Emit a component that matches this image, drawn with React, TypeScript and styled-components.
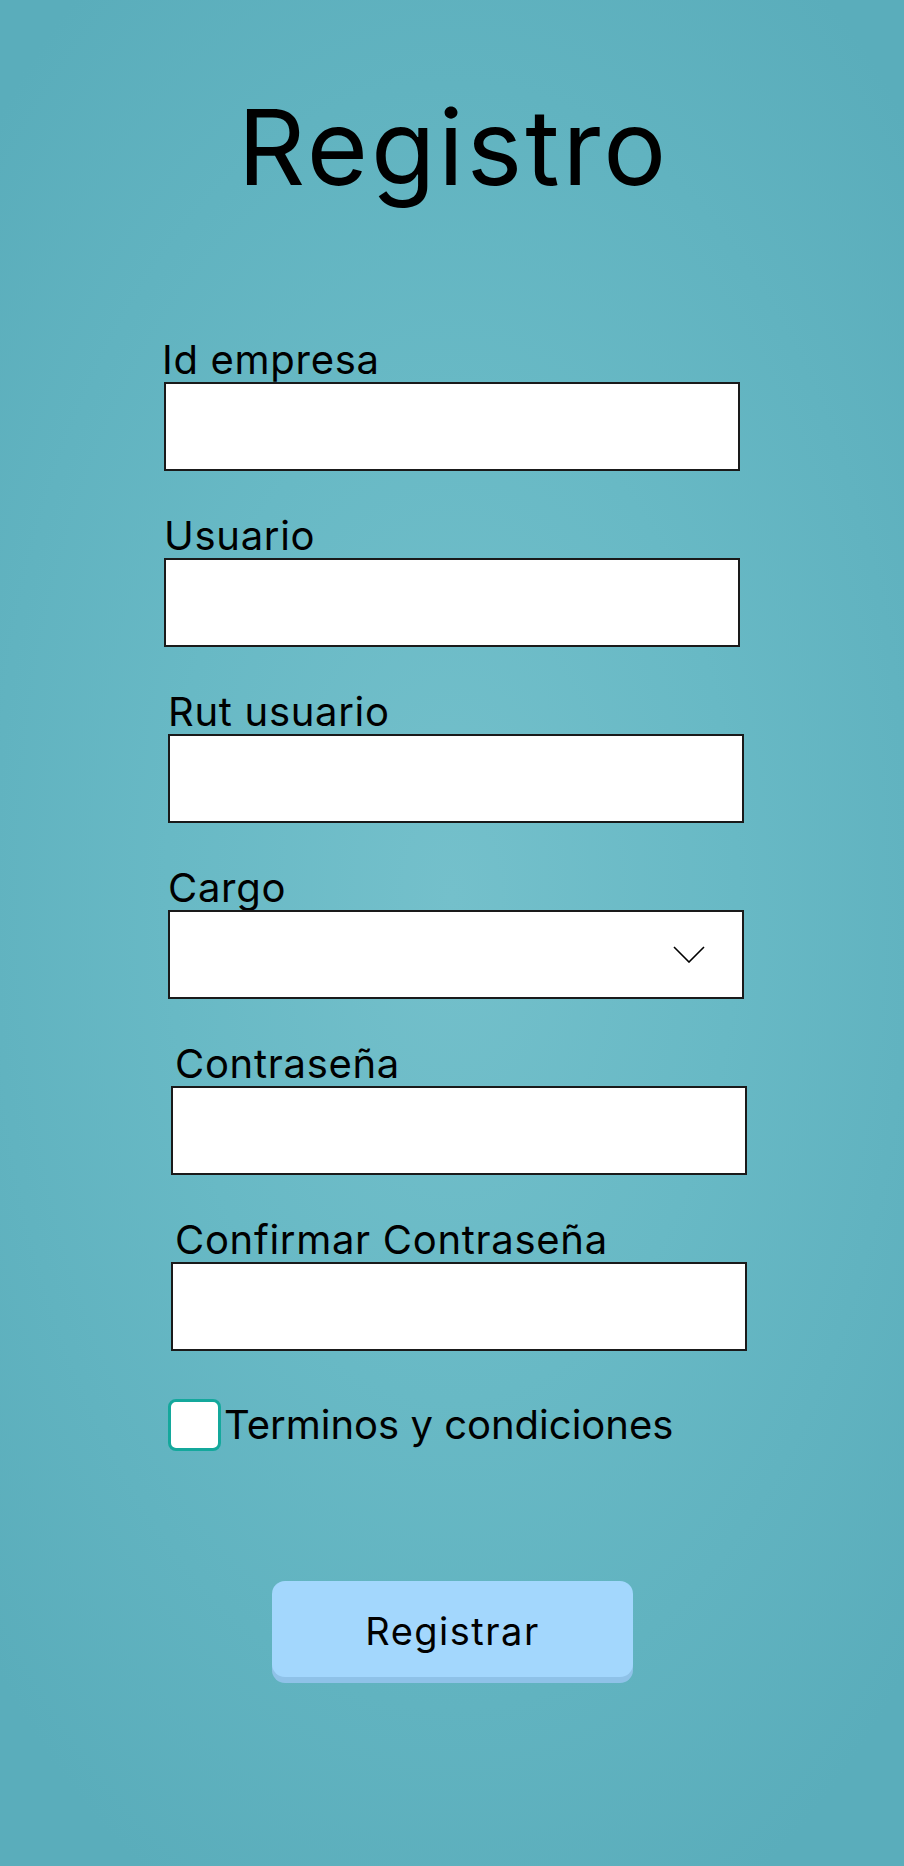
import React from "react";
import styled, { createGlobalStyle } from "styled-components";

const Global = createGlobalStyle`
  html, body { margin: 0; padding: 0; }
  body {
    font-family: Inter, "Noto Sans", sans-serif;
    color: #000;
    background: #5cafbd;
  }
`;

const Page = styled.main`
  box-sizing: border-box;
  width: 904px;
  min-height: 1866px;
  padding-top: 94px;
  display: flex;
  flex-direction: column;
  align-items: center;
  background: radial-gradient(ellipse 70% 60% at 50% 48%, #74c0cb 0%, #68b9c5 45%, #5aadbb 100%);
`;

const Title = styled.h1`
  margin: 0;
  font-family: Inter, sans-serif;
  font-weight: 400;
  font-size: 105px;
  line-height: 105px;
  letter-spacing: 3px;
  padding-left: 3px;
`;

const Form = styled.form`
  margin-top: 138px;
  width: 100%;
  display: flex;
  flex-direction: column;
  gap: 42px;
`;

const Field = styled.div<{ $shift: number }>`
  display: flex;
  flex-direction: column;
  margin-left: ${(p) => p.$shift}px;
  width: 576px;
`;

const Label = styled.label<{ $shift: number }>`
  font-size: 40px;
  line-height: 45px;
  height: 45px;
  letter-spacing: 0.7px;
  margin-left: ${(p) => p.$shift}px;
  white-space: nowrap;
`;

const Box = styled.div`
  box-sizing: border-box;
  height: 89px;
  background: #fff;
  border: 2px solid #1a1a1a;
  display: flex;
  align-items: center;
  justify-content: flex-end;
  padding-right: 37px;
`;

const Input = styled.input`
  box-sizing: border-box;
  height: 89px;
  width: 100%;
  background: #fff;
  border: 2px solid #1a1a1a;
  outline: none;
  font-size: 32px;
  font-family: Inter, sans-serif;
  padding: 0 16px;
`;

const CheckRow = styled.div`
  align-self: flex-start;
  margin-top: 48px;
  margin-left: 168px;
  display: flex;
  align-items: center;
  gap: 3px;
`;

const Check = styled.span`
  box-sizing: border-box;
  width: 53px;
  height: 52px;
  border: 3px solid #14a89c;
  border-radius: 8px;
  background: #fff;
`;

const CheckText = styled.span`
  font-size: 40px;
  line-height: 52px;
`;

const ButtonWrap = styled.div`
  margin-top: 130px;
  display: flex;
  justify-content: center;
  width: 100%;
`;

const Button = styled.button`
  width: 361px;
  height: 96px;
  margin-left: 1px;
  border: none;
  border-radius: 13px;
  background: #a3d7fd;
  box-shadow: 0 6px 0 #8fc2e8;
  font-family: Inter, sans-serif;
  font-size: 38px;
  letter-spacing: 1.5px;
  color: #000;
  display: flex;
  align-items: center;
  justify-content: center;
  padding: 4px 0 0 0;
`;

const fields = [
  { label: "Id empresa", shift: 164, lshift: -2, type: "text" },
  { label: "Usuario", shift: 164, lshift: 0, type: "text" },
  { label: "Rut usuario", shift: 168, lshift: 0, type: "text" },
  { label: "Cargo", shift: 168, lshift: 0, type: "select" },
  { label: "Contraseña", shift: 171, lshift: 4, type: "password" },
  { label: "Confirmar Contraseña", shift: 171, lshift: 4, type: "password" },
];

const Chevron = () => (
  <svg width="32" height="17" viewBox="0 0 32 17" fill="none">
    <path d="M1 1 L16 16 L31 1" stroke="#000" strokeWidth="1.6" />
  </svg>
);

export default function App() {
  return (
    <>
      <Global />
      <Page>
        <Title>Registro</Title>
        <Form onSubmit={(e) => e.preventDefault()}>
          {fields.map((f) => (
            <Field key={f.label} $shift={f.shift}>
              <Label $shift={f.lshift}>{f.label}</Label>
              {f.type === "select" ? (
                <Box>
                  <Chevron />
                </Box>
              ) : (
                <Input type={f.type} />
              )}
            </Field>
          ))}
        </Form>
        <CheckRow>
          <Check />
          <CheckText>Terminos y condiciones</CheckText>
        </CheckRow>
        <ButtonWrap>
          <Button type="button">Registrar</Button>
        </ButtonWrap>
      </Page>
    </>
  );
}
